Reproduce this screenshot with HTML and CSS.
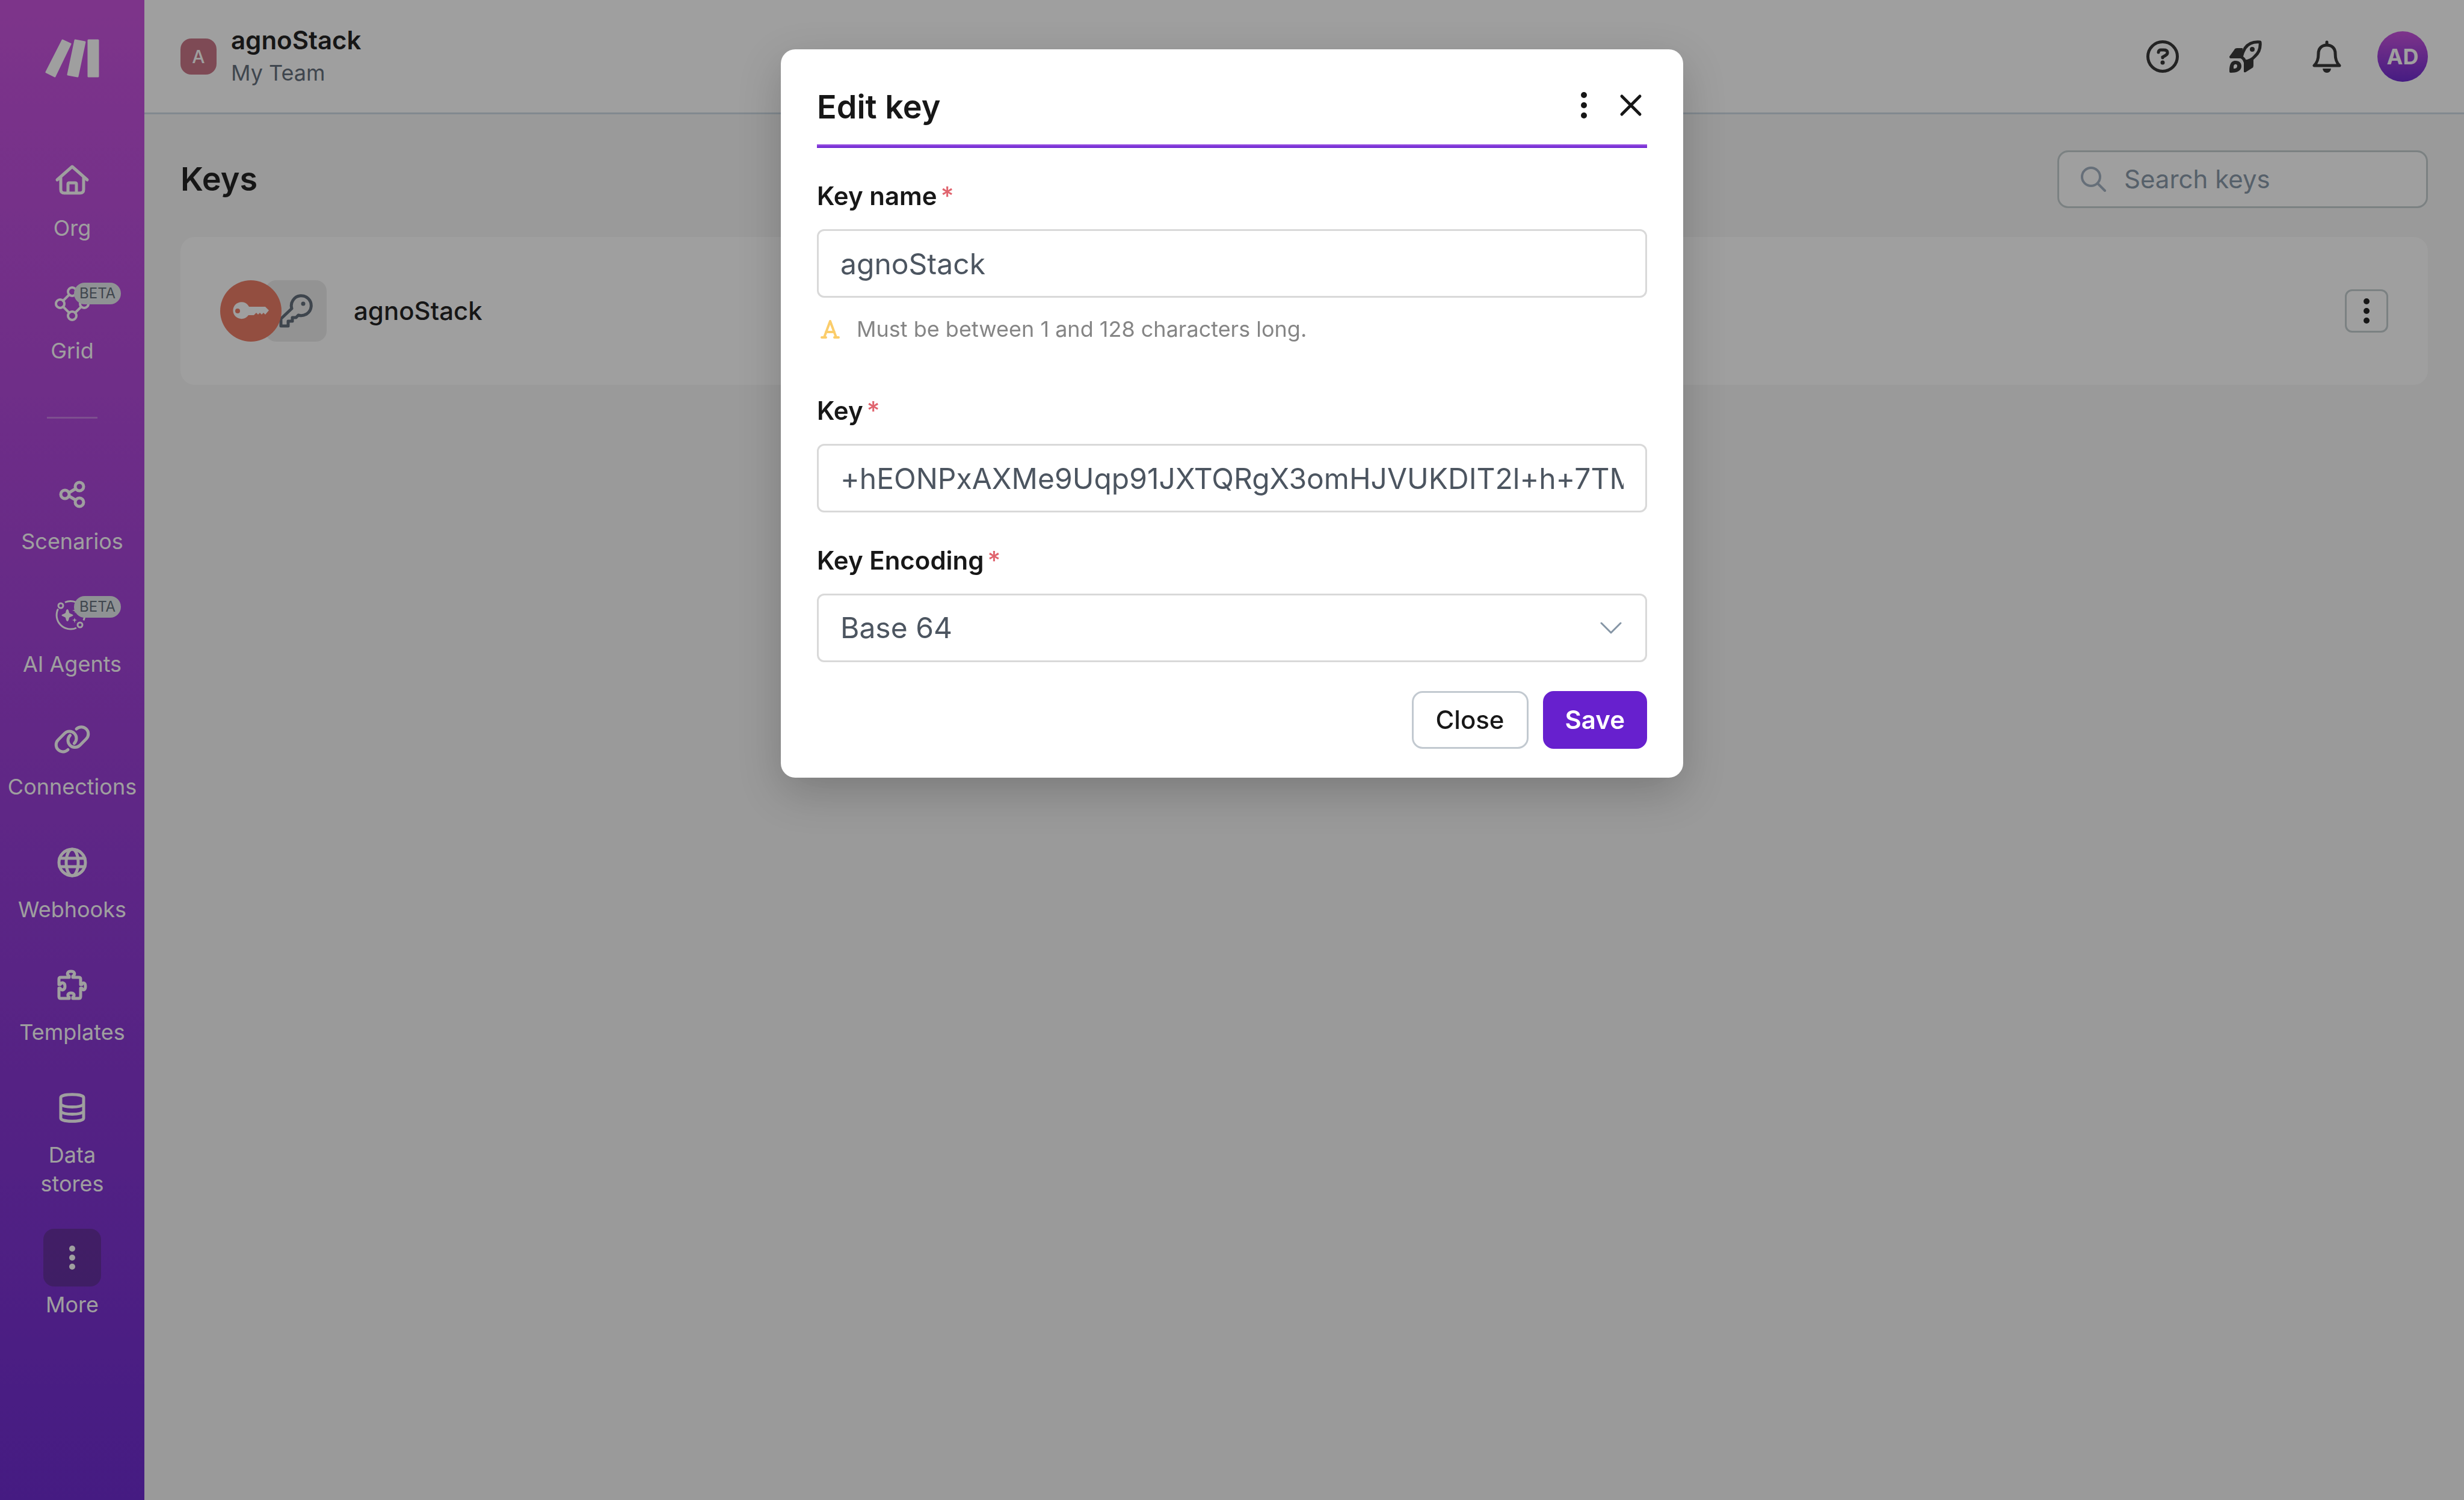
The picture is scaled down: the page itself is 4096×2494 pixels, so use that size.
FILE: index.html
```
<!DOCTYPE html>
<html lang="en">
<head>
  <meta charset="UTF-8">
  <meta name="viewport" content="width=device-width, initial-scale=1.0">
  <title>Keys</title>
  <link rel="stylesheet" href="styles.css">
</head>
<body>
  <div class="app">
    <aside class="sidebar">
      <a href="#" class="logo" aria-label="Home">
        <svg width="90" height="64" viewBox="0 0 90 64" fill="currentColor" stroke="currentColor" stroke-width="3" stroke-linejoin="round">
          <path d="M29 2 42 8 16 62 2 55Z"/>
          <path d="M50 2 66 5 54 62 38 59Z"/>
          <path d="M72 2H88V62H72Z"/>
        </svg>
      </a>

      <nav>
        <ul class="nav-list">
          <li>
            <a href="#" class="nav-item">
              <span class="nav-icon">
                <svg class="icon" viewBox="0 0 60 60">
                  <path d="M5 28 30 6 55 28M11 24V44Q11 50 17 50H43Q49 50 49 44V24M23 50V35Q23 33 25 33H35Q37 33 37 35V50"/>
                </svg>
              </span>
              <span>Org</span>
            </a>
          </li>
          <li>
            <a href="#" class="nav-item">
              <span class="nav-icon">
                <svg class="icon" viewBox="0 0 60 60" stroke-width="4">
                  <circle cx="30" cy="10" r="7"/>
                  <circle cx="10" cy="30" r="7"/>
                  <circle cx="50" cy="30" r="7"/>
                  <circle cx="30" cy="50" r="7"/>
                  <path d="M25 15 15 25M35 15 45 25M15 35 25 45M45 35 35 45"/>
                </svg>
              </span>
              <span>Grid</span>
              <span class="beta">BETA</span>
            </a>
          </li>
        </ul>

        <hr class="nav-divider">

        <ul class="nav-list">
          <li>
            <a href="#" class="nav-item">
              <span class="nav-icon">
                <svg class="icon" viewBox="0 0 60 60">
                  <circle cx="18" cy="30" r="7"/>
                  <circle cx="42" cy="17" r="7"/>
                  <circle cx="42" cy="43" r="7"/>
                  <path d="M25 27 35 21M25 33 35 39"/>
                </svg>
              </span>
              <span>Scenarios</span>
            </a>
          </li>
          <li>
            <a href="#" class="nav-item">
              <span class="nav-icon">
                <svg class="icon" viewBox="0 0 60 60" stroke-width="3">
                  <path stroke-linecap="butt" d="M18 5.500A23.300 23.300 0 0 1 49 35.500M37 48A23.300 23.300 0 0 1 6.500 16.500"/>
                  <circle cx="11" cy="11" r="4"/>
                  <circle cx="43" cy="43" r="4"/>
                  <g fill="currentColor" stroke="none">
                    <path d="M22 17Q24 17 25 23 26 24 31 26 32 27 31 28 26 30 25 31 24 37 22 37 20 37 19 31 18 30 13 28 12 27 13 26 18 24 19 23 20 17 22 17Z"/>
                    <path d="M34 31 35 34 38 35 35 36 34 40 33 36 30 35 33 34Z"/>
                    <path d="M35 14 36 18 40 19 36 20 35 24 34 20 30 19 34 18Z"/>
                  </g>
                </svg>
              </span>
              <span>AI Agents</span>
              <span class="beta">BETA</span>
            </a>
          </li>
          <li>
            <a href="#" class="nav-item">
              <span class="nav-icon">
                <svg class="icon" viewBox="0 0 60 60">
                  <path d="M23 46.500A11.500 11.500 0 0 1 6.600 30.200L17.500 19.200A11.500 11.500 0 0 1 33.400 36"/>
                  <path d="M37 12.100A11.500 11.500 0 0 1 53.400 28.400L42.500 39.400A11.500 11.500 0 0 1 26.600 22.600"/>
                </svg>
              </span>
              <span>Connections</span>
            </a>
          </li>
          <li>
            <a href="#" class="nav-item">
              <span class="nav-icon">
                <svg class="icon" viewBox="0 0 60 60">
                  <circle cx="30" cy="30" r="22"/>
                  <ellipse cx="30" cy="30" rx="10" ry="22"/>
                  <path d="M9 23H51M9 37H51"/>
                </svg>
              </span>
              <span>Webhooks</span>
            </a>
          </li>
          <li>
            <a href="#" class="nav-item">
              <span class="nav-icon">
                <svg class="icon" viewBox="0 0 60 60">
                  <path d="M11 17H25V15C20 12 22 7 28 7S36 12 31 15V17H41Q44 17 44 20V29H46C48 24 52 26 52 32S48 40 46 35H44V49Q44 52 41 52H31V50C35 47 33 43 28 43S21 47 25 50V52H11Q8 52 8 49V35H10C13 40 18 38 18 32S13 24 10 29H8V20Q8 17 11 17Z"/>
                </svg>
              </span>
              <span>Templates</span>
            </a>
          </li>
          <li>
            <a href="#" class="nav-item">
              <span class="nav-icon">
                <svg class="icon" viewBox="0 0 60 60">
                  <path d="M11 13C11 6 49 6 49 13V47C49 54 11 54 11 47ZM11 24C16 30 44 30 49 24M11 36C16 42 44 42 49 36"/>
                </svg>
              </span>
              <span>Data<br>stores</span>
            </a>
          </li>
          <li>
            <a href="#" class="nav-item active">
              <span class="nav-icon">
                <svg class="icon dots" viewBox="0 0 60 60">
                  <circle cx="30" cy="15" r="5"/>
                  <circle cx="30" cy="30" r="5"/>
                  <circle cx="30" cy="45" r="5"/>
                </svg>
              </span>
              <span>More</span>
            </a>
          </li>
        </ul>
      </nav>
    </aside>

    <div class="content">
      <header class="topbar">
        <a href="#" class="team">
          <span class="team-badge">A</span>
          <span class="team-text">
            <span class="team-org">agnoStack</span>
            <span class="team-name">My Team</span>
          </span>
        </a>
        <div class="topbar-actions">
          <button type="button" class="icon-btn" aria-label="Help">
            <svg width="54" height="54" viewBox="0 0 54 54" fill="none" stroke="currentColor" stroke-width="5" stroke-linecap="round">
              <circle cx="27" cy="27" r="24.500"/>
              <path d="M20 20C20 17 22 16 24 16H29C37 16 36 23 32 25L27 28V29"/>
              <circle cx="27" cy="37" r="3.500" fill="currentColor" stroke="none"/>
            </svg>
          </button>
          <button type="button" class="icon-btn" aria-label="What's new">
            <svg width="54" height="54" viewBox="0 0 54 54" fill="currentColor">
              <path fill="none" stroke="currentColor" stroke-width="5" stroke-linejoin="round" d="M51 3C40 2 31 6 26 13 23 18 21 23 20 28 24 30 25 32 26 36 33 34 38 32 42 27 49 21 52 12 51 3Z"/>
              <circle cx="38" cy="15" r="4"/>
              <path d="M22 13H13Q9 13 8 16L0 27Q0 30 2 30H21Z"/>
              <path d="M24 33V52Q24 54 27 53L38 46Q40 45 40 42V30Z"/>
              <path fill-rule="evenodd" d="M0 52C0 44 1 34 10 34 17 34 20 38 20 43 20 51 12 54 2 54Q0 54 0 52ZM7 47C12 47 13 45 13 42 12 39 8 39 7 43Z"/>
            </svg>
          </button>
          <button type="button" class="icon-btn" aria-label="Notifications">
            <svg width="48" height="54" viewBox="0 0 48 54" fill="none" stroke="currentColor" stroke-width="5" stroke-linecap="round" stroke-linejoin="round">
              <path d="M24 3V8M24 8C15 8 10 14 10 22C10 32 8 37 3 42H45C40 37 38 32 38 22C38 14 33 8 24 8Z"/>
              <path fill="currentColor" stroke="none" d="M17 47H31Q30 54 24 54T17 47Z"/>
            </svg>
          </button>
          <button type="button" class="avatar">AD</button>
        </div>
      </header>

      <main class="main">
        <div class="page-head">
          <h1>Keys</h1>
          <label class="search">
            <svg width="42" height="42" viewBox="0 0 42 42" fill="none" stroke="currentColor" stroke-width="4" stroke-linecap="round">
              <circle cx="17" cy="17" r="15"/>
              <path d="M28 28 40 40"/>
            </svg>
            <input type="search" placeholder="Search keys" aria-label="Search keys">
          </label>
        </div>

        <section class="key-card">
          <span class="key-icons">
            <span class="key-app">
              <svg width="102" height="102" viewBox="0 0 102 102" fill="currentColor">
                <path fill-rule="evenodd" d="M48 44H75L81 50 75 57 72 54 69 57 66 54 63 57 60 54 56 58H47A14 14 0 1 1 48 44ZM33 51A4 4 0 1 0 25 51 4 4 0 1 0 33 51Z"/>
              </svg>
            </span>
            <span class="key-type">
              <svg width="102" height="102" viewBox="0 0 102 102" fill="none" stroke="currentColor" stroke-width="5" stroke-linejoin="round">
                <path d="M44 47A16.500 16.500 0 1 1 55 58L51 62H45V68H38V76H26V64Z"/>
                <circle cx="63" cy="39" r="3.500" fill="currentColor" stroke="none"/>
              </svg>
            </span>
          </span>
          <span class="key-name">agnoStack</span>
          <button type="button" class="more-btn" aria-label="Key options">
            <svg class="icon dots" viewBox="0 0 60 60">
              <circle cx="30" cy="14" r="5"/>
              <circle cx="30" cy="30" r="5"/>
              <circle cx="30" cy="46" r="5"/>
            </svg>
          </button>
        </section>
      </main>
    </div>
  </div>

  <div class="overlay">
    <form class="modal" role="dialog" aria-labelledby="modalTitle">
      <div class="modal-head">
        <h2 id="modalTitle">Edit key</h2>
        <div class="modal-tools">
          <button type="button" class="icon-btn" aria-label="Options">
            <svg width="54" height="54" viewBox="0 0 54 54" fill="currentColor">
              <circle cx="27" cy="10" r="5"/>
              <circle cx="27" cy="27" r="5"/>
              <circle cx="27" cy="44" r="5"/>
            </svg>
          </button>
          <button type="button" class="icon-btn" aria-label="Close dialog">
            <svg width="54" height="54" viewBox="0 0 54 54" fill="none" stroke="currentColor" stroke-width="5" stroke-linecap="round">
              <path d="M12 12 42 42M42 12 12 42"/>
            </svg>
          </button>
        </div>
      </div>

      <div class="field">
        <label for="keyName">Key name<span class="required">*</span></label>
        <input type="text" id="keyName" class="control" value="agnoStack">
        <p class="hint">
          <svg width="32" height="32" viewBox="0 0 32 32" fill="none" stroke="currentColor" stroke-width="4" stroke-linecap="round" stroke-linejoin="round">
            <path d="M6 30 16 3 26 30M9 21H23M2 30H9M23 30H30"/>
          </svg>
          Must be between 1 and 128 characters long.
        </p>
      </div>

      <div class="field">
        <label for="keyValue">Key<span class="required">*</span></label>
        <input type="text" id="keyValue" class="control" value="+hEONPxAXMe9Uqp91JXTQRgX3omHJVUKDIT2l+h+7TM">
      </div>

      <div class="field">
        <label for="keyEncoding">Key Encoding<span class="required">*</span></label>
        <div class="select">
          <select id="keyEncoding" class="control">
            <option>Base 64</option>
          </select>
          <svg width="36" height="20" viewBox="0 0 36 20" fill="none" stroke="currentColor" stroke-width="3" stroke-linecap="round" stroke-linejoin="round">
            <path d="M2 2 18 18 34 2"/>
          </svg>
        </div>
      </div>

      <div class="modal-actions">
        <button type="button" class="btn">Close</button>
        <button type="submit" class="btn btn-primary">Save</button>
      </div>
    </form>
  </div>
</body>
</html>
```

FILE: styles.css
```
* {
  margin: 0;
  padding: 0;
  box-sizing: border-box;
}

body {
  font-family: Inter, "Liberation Sans", sans-serif;
  font-size: 42px;
  line-height: 54px;
  color: #171717;
  background: #f6f6f6;
}

a {
  color: inherit;
  text-decoration: none;
}

button, input, select {
  font: inherit;
  color: inherit;
}

button {
  border: none;
  background: none;
  cursor: pointer;
}

svg {
  display: block;
  flex-shrink: 0;
}

.app {
  display: flex;
  min-height: 100vh;
}

/* sidebar */

.sidebar {
  width: 240px;
  flex-shrink: 0;
  padding-top: 65px;
  color: white;
  background: linear-gradient(#c64adc, #6720ce);
}

.logo {
  display: flex;
  justify-content: center;
  margin-bottom: 124px;
}

.nav-list {
  display: flex;
  flex-direction: column;
  gap: 51px;
  list-style: none;
}

.nav-item {
  position: relative;
  display: flex;
  flex-direction: column;
  align-items: center;
  gap: 6px;
  min-height: 153px;
  font-size: 36px;
  line-height: 48px;
  text-align: center;
}

.nav-icon {
  display: flex;
  align-items: center;
  justify-content: center;
  width: 96px;
  height: 96px;
  border-radius: 18px;
}

.nav-item.active .nav-icon {
  background: rgba(26, 31, 10, 0.26);
}

.icon {
  width: 60px;
  height: 60px;
  fill: none;
  stroke: currentColor;
  stroke-linecap: round;
  stroke-linejoin: round;
}

.icon:not([stroke-width]) {
  stroke-width: 5px;
}

.icon.dots {
  fill: currentColor;
  stroke: none;
}

.beta {
  position: absolute;
  top: 13px;
  left: calc(50% + 3px);
  padding: 0 9px;
  border-radius: 18px;
  background: #e4e9ec;
  color: #5d6876;
  font-size: 24px;
  line-height: 36px;
}

.nav-divider {
  width: 84px;
  height: 3px;
  margin: 83px auto 78px;
  border: none;
  background: rgba(255, 255, 255, 0.3);
}

/* top bar */

.content {
  flex: 1;
  min-width: 0;
}

.topbar {
  display: flex;
  align-items: center;
  justify-content: space-between;
  height: 190px;
  padding: 0 60px;
  border-bottom: 3px solid #ccdae4;
  background: white;
}

.team {
  display: flex;
  align-items: center;
  gap: 24px;
}

.team-badge {
  width: 60px;
  border-radius: 18px;
  background: #c86f82;
  color: white;
  font-size: 30px;
  font-weight: 500;
  line-height: 60px;
  text-align: center;
}

.team-text {
  display: flex;
  flex-direction: column;
}

.team-org {
  font-weight: 600;
}

.team-name {
  color: #5d6876;
  font-size: 36px;
}

.topbar-actions {
  display: flex;
  align-items: center;
  gap: 84px;
  color: #2d2d2d;
}

.avatar {
  width: 84px;
  height: 84px;
  margin-left: -24px;
  border-radius: 50%;
  background: linear-gradient(#c64adc, #6720ce);
  color: white;
  font-size: 36px;
  font-weight: 700;
}

/* keys page */

.main {
  padding: 60px;
}

.page-head {
  display: flex;
  align-items: center;
  justify-content: space-between;
  margin-bottom: 48px;
}

h1 {
  font-size: 54px;
  font-weight: 600;
  line-height: 72px;
}

.search {
  display: flex;
  align-items: center;
  gap: 30px;
  width: 616px;
  height: 96px;
  padding: 0 36px;
  border: 3px solid #c2ccce;
  border-radius: 18px;
  background: white;
  color: #9eadbe;
}

.search input {
  flex: 1;
  min-width: 0;
  border: none;
  outline: none;
  background: none;
  color: #171717;
}

.search input::placeholder {
  color: #8394a5;
}

.key-card {
  display: flex;
  align-items: center;
  gap: 45px;
  padding: 72px 66px;
  border-radius: 24px;
  background: white;
}

.key-icons {
  display: flex;
}

.key-app {
  z-index: 1;
  border-radius: 50%;
  background: #eb765e;
  color: white;
}

.key-type {
  margin-left: -27px;
  border-radius: 18px;
  background: #ebebeb;
  color: #5a6774;
}

.key-name {
  flex: 1;
  font-weight: 500;
}

.more-btn {
  display: flex;
  align-items: center;
  justify-content: center;
  width: 72px;
  height: 72px;
  border: 3px solid #c2ccce;
  border-radius: 12px;
}

/* edit dialog */

.overlay {
  position: fixed;
  inset: 0;
  z-index: 10;
  display: flex;
  align-items: flex-start;
  justify-content: center;
  padding: 82px 60px;
  background: rgba(21, 21, 21, 0.41);
}

.modal {
  width: 100%;
  max-width: 1500px;
  padding: 60px 60px 48px;
  border-radius: 24px;
  background: white;
  box-shadow: 0 24px 72px rgba(0, 0, 0, 0.2);
}

.modal-head {
  display: flex;
  justify-content: space-between;
  padding-bottom: 32px;
  background: linear-gradient(#9d55e3, #6720ce) bottom / 100% 6px no-repeat;
}

h2 {
  font-size: 54px;
  font-weight: 600;
  line-height: 72px;
}

.modal-tools {
  display: flex;
  align-items: center;
  gap: 24px;
  height: 66px;
}

.field {
  display: flex;
  flex-direction: column;
  gap: 28px;
  margin-top: 53px;
}

.field label {
  font-weight: 600;
}

.required {
  margin-left: 6px;
  color: #e0646e;
  font-weight: 500;
}

.control {
  width: 100%;
  height: 114px;
  padding: 0 36px;
  border: 3px solid #d9d9d9;
  border-radius: 12px;
  outline: none;
  background: white;
  color: #4c5560;
  font-size: 48px;
}

.hint {
  display: flex;
  align-items: center;
  gap: 28px;
  padding: 0 6px;
  margin-bottom: 32px;
  color: #858585;
  font-size: 36px;
  line-height: 48px;
}

.hint svg {
  color: #fbcd6b;
}

/* chevron shares the grid cell with the select */
.select {
  display: grid;
  align-items: center;
}

.select > * {
  grid-area: 1 / 1;
}

.select select {
  appearance: none;
}

.select svg {
  justify-self: end;
  margin-right: 42px;
  color: #8595a5;
  pointer-events: none;
}

.modal-actions {
  display: flex;
  justify-content: flex-end;
  gap: 24px;
  margin-top: 48px;
}

.btn {
  height: 96px;
  padding: 0 37px;
  border: 3px solid #c2c9d0;
  border-radius: 18px;
  background: white;
  font-weight: 500;
}

.btn-primary {
  padding: 0 34px;
  border-color: #6720ce;
  background: #6720ce;
  color: white;
  font-weight: 600;
}
```
